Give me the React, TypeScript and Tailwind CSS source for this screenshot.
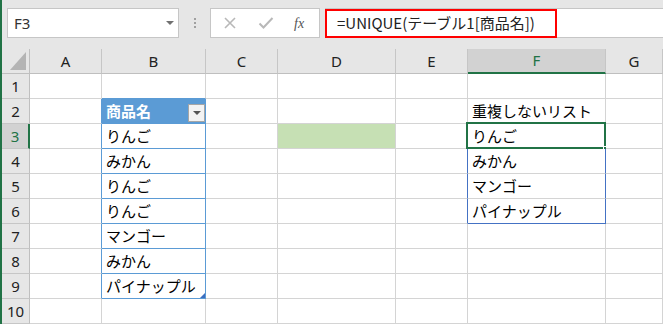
import React from 'react';

const COLS = ['A', 'B', 'C', 'D', 'E', 'F', 'G'];
const WIDTHS = ['w-[72px]', 'w-[104px]', 'w-[72px]', 'w-[118px]', 'w-[72px]', 'w-[138px]', 'flex-1'];

const B_LIST = ['りんご', 'みかん', 'りんご', 'りんご', 'マンゴー', 'みかん', 'パイナップル'];
const F_LIST = ['りんご', 'みかん', 'マンゴー', 'パイナップル'];

const jp = { fontFamily: "'Noto Sans CJK JP', 'Noto Sans', sans-serif" };
const ui = { fontFamily: "'Noto Sans', 'Liberation Sans', sans-serif" };

const cellText = (row: number, col: string) => {
  if (col === 'B' && row >= 3 && row <= 9) return B_LIST[row - 3];
  if (col === 'F' && row === 2) return '重複しないリスト';
  if (col === 'F' && row >= 3 && row <= 6) return F_LIST[row - 3];
  return '';
};

const cellBorder = (row: number, col: string) => {
  let r = 'border-r-[#d4d4d4]';
  let b = 'border-b-[#d4d4d4]';
  if (col === 'A' && row >= 2 && row <= 9) r = 'border-r-[#5b9bd5]';
  if (col === 'B' && row === 1) b = 'border-b-[#5b9bd5]';
  if (col === 'B' && row >= 2 && row <= 9) {
    r = 'border-r-[#5b9bd5]';
    b = 'border-b-[#5b9bd5]';
  }
  if (col === 'E' && row >= 3 && row <= 6) r = 'border-r-[#4472c4]';
  if (col === 'F' && row >= 3 && row <= 6) r = 'border-r-[#4472c4]';
  if (col === 'F' && row === 6) b = 'border-b-[#4472c4]';
  return `${r} ${b}`;
};

function Cell({ row, col, width }: { row: number; col: string; width: string }) {
  const text = cellText(row, col);
  const isHeader = col === 'B' && row === 2;
  const isGreen = col === 'D' && row === 3;
  const bg = isHeader ? 'bg-[#5b9bd5]' : isGreen ? 'bg-[#c6e0b4]' : 'bg-white';
  return (
    <div
      className={`relative flex h-full shrink-0 items-end border-r border-b pb-[1px] pl-[4px] ${width} ${bg} ${cellBorder(row, col)}`}
      style={jp}
    >
      {isHeader ? (
        <>
          <span className="text-[15px] leading-[22px] font-bold text-white">商品名</span>
          <div className="absolute top-[5px] right-[0px] flex h-[18px] w-[17px] items-center justify-center border border-[#a6a6a6] bg-[#f3f3f3]">
            <div className="h-0 w-0 border-x-[4px] border-t-[4px] border-x-transparent border-t-[#555]" />
          </div>
        </>
      ) : (
        <span className="text-[15px] leading-[22px] whitespace-nowrap text-black">{text}</span>
      )}
      {col === 'B' && row === 9 && (
        <div className="absolute right-[0px] bottom-[0px] h-0 w-0 border-b-[5px] border-l-[5px] border-b-[#3d6fc0] border-l-transparent" />
      )}
      {col === 'F' && row === 3 && (
        <>
          <div className="absolute -top-[2px] -left-[2px] h-[27px] w-[140px] border-2 border-[#217346]" />
          <div className="absolute -right-[4px] -bottom-[4px] h-[6px] w-[6px] border border-white bg-[#217346]" />
        </>
      )}
    </div>
  );
}

export default function App() {
  const rows = Array.from({ length: 10 }, (_, i) => i + 1);
  return (
    <div className="flex h-[324px] w-[663px] overflow-hidden bg-white">
      <div className="w-[2px] shrink-0 bg-[#217346]" />
      <div className="flex min-w-0 flex-1 flex-col">
        {/* formula bar */}
        <div className="flex h-[49px] shrink-0 items-start bg-[#e6e6e6] pt-[8px] pl-[5px]">
          <div className="flex h-[30px] w-[172px] items-center justify-between border border-[#c6c6c6] bg-white pr-[4px] pl-[6px]">
            <span className="text-[15px] text-[#333]" style={ui}>F3</span>
            <div className="h-0 w-0 border-x-[4px] border-t-[4px] border-x-transparent border-t-[#707070]" />
          </div>
          <div className="flex h-[30px] w-[31px] flex-col items-center justify-center gap-[2px]">
            <div className="h-[2px] w-[2px] bg-[#a0a0a0]" />
            <div className="h-[2px] w-[2px] bg-[#a0a0a0]" />
            <div className="h-[2px] w-[2px] bg-[#a0a0a0]" />
          </div>
          <div className="flex h-[30px] w-[110px] items-center border border-[#c6c6c6] bg-white">
            <svg width="14" height="14" viewBox="0 0 14 14" className="ml-[12px]">
              <path d="M2 2 L12 12 M12 2 L2 12" stroke="#b8b8b8" strokeWidth="1.6" fill="none" />
            </svg>
            <svg width="16" height="14" viewBox="0 0 16 14" className="ml-[21px]">
              <path d="M1.5 7.5 L5.5 11.5 L14.5 2" stroke="#b8b8b8" strokeWidth="2" fill="none" />
            </svg>
            <span className="ml-[20px] text-[14px] text-[#555] italic" style={{ fontFamily: "'Liberation Serif', serif" }}>
              fx
            </span>
          </div>
          <div className="ml-[5px] flex h-[30px] flex-1 border-y border-[#c6c6c6] bg-white">
            <div className="flex h-[29px] w-[232px] items-center border-2 border-[#ff0000] pl-[10px]">
              <span className="text-[15px] whitespace-nowrap text-[#222]" style={jp}>=UNIQUE(テーブル1[商品名])</span>
            </div>
          </div>
        </div>

        {/* column headers */}
        <div className="flex h-[25px] shrink-0 bg-[#e6e6e6]" style={ui}>
          <div className="relative flex h-full w-[28px] shrink-0 items-end justify-end border-r border-b border-[#bfbfbf] pr-[3px] pb-[3px]">
            <svg width="16" height="18" viewBox="0 0 16 18">
              <polygon points="16,0 16,18 0,18" fill="#b4b4b4" />
            </svg>
          </div>
          {COLS.map((c, i) => (
            <div
              key={c}
              className={`flex h-full shrink-0 items-center justify-center border-r text-[15px] ${WIDTHS[i]} ${
                c === 'F'
                  ? 'border-r-[#c6c6c6] border-b-2 border-b-[#217346] bg-[#d2d2d2] text-[#217346]'
                  : 'border-r-[#c6c6c6] border-b border-b-[#bfbfbf] text-[#222]'
              }`}
            >
              {c}
            </div>
          ))}
        </div>

        {/* rows */}
        {rows.map((r) => (
          <div key={r} className="flex h-[25px] shrink-0">
            <div
              className={`flex h-full w-[28px] shrink-0 items-center justify-center border-b border-b-[#c6c6c6] text-[15px] ${
                r === 3
                  ? 'border-r-2 border-r-[#217346] bg-[#d2d2d2] text-[#217346]'
                  : 'border-r border-r-[#bfbfbf] bg-[#e6e6e6] text-[#222]'
              }`}
              style={ui}
            >
              {r}
            </div>
            {COLS.map((c, i) => (
              <Cell key={c} row={r} col={c} width={WIDTHS[i]} />
            ))}
          </div>
        ))}
      </div>
    </div>
  );
}
